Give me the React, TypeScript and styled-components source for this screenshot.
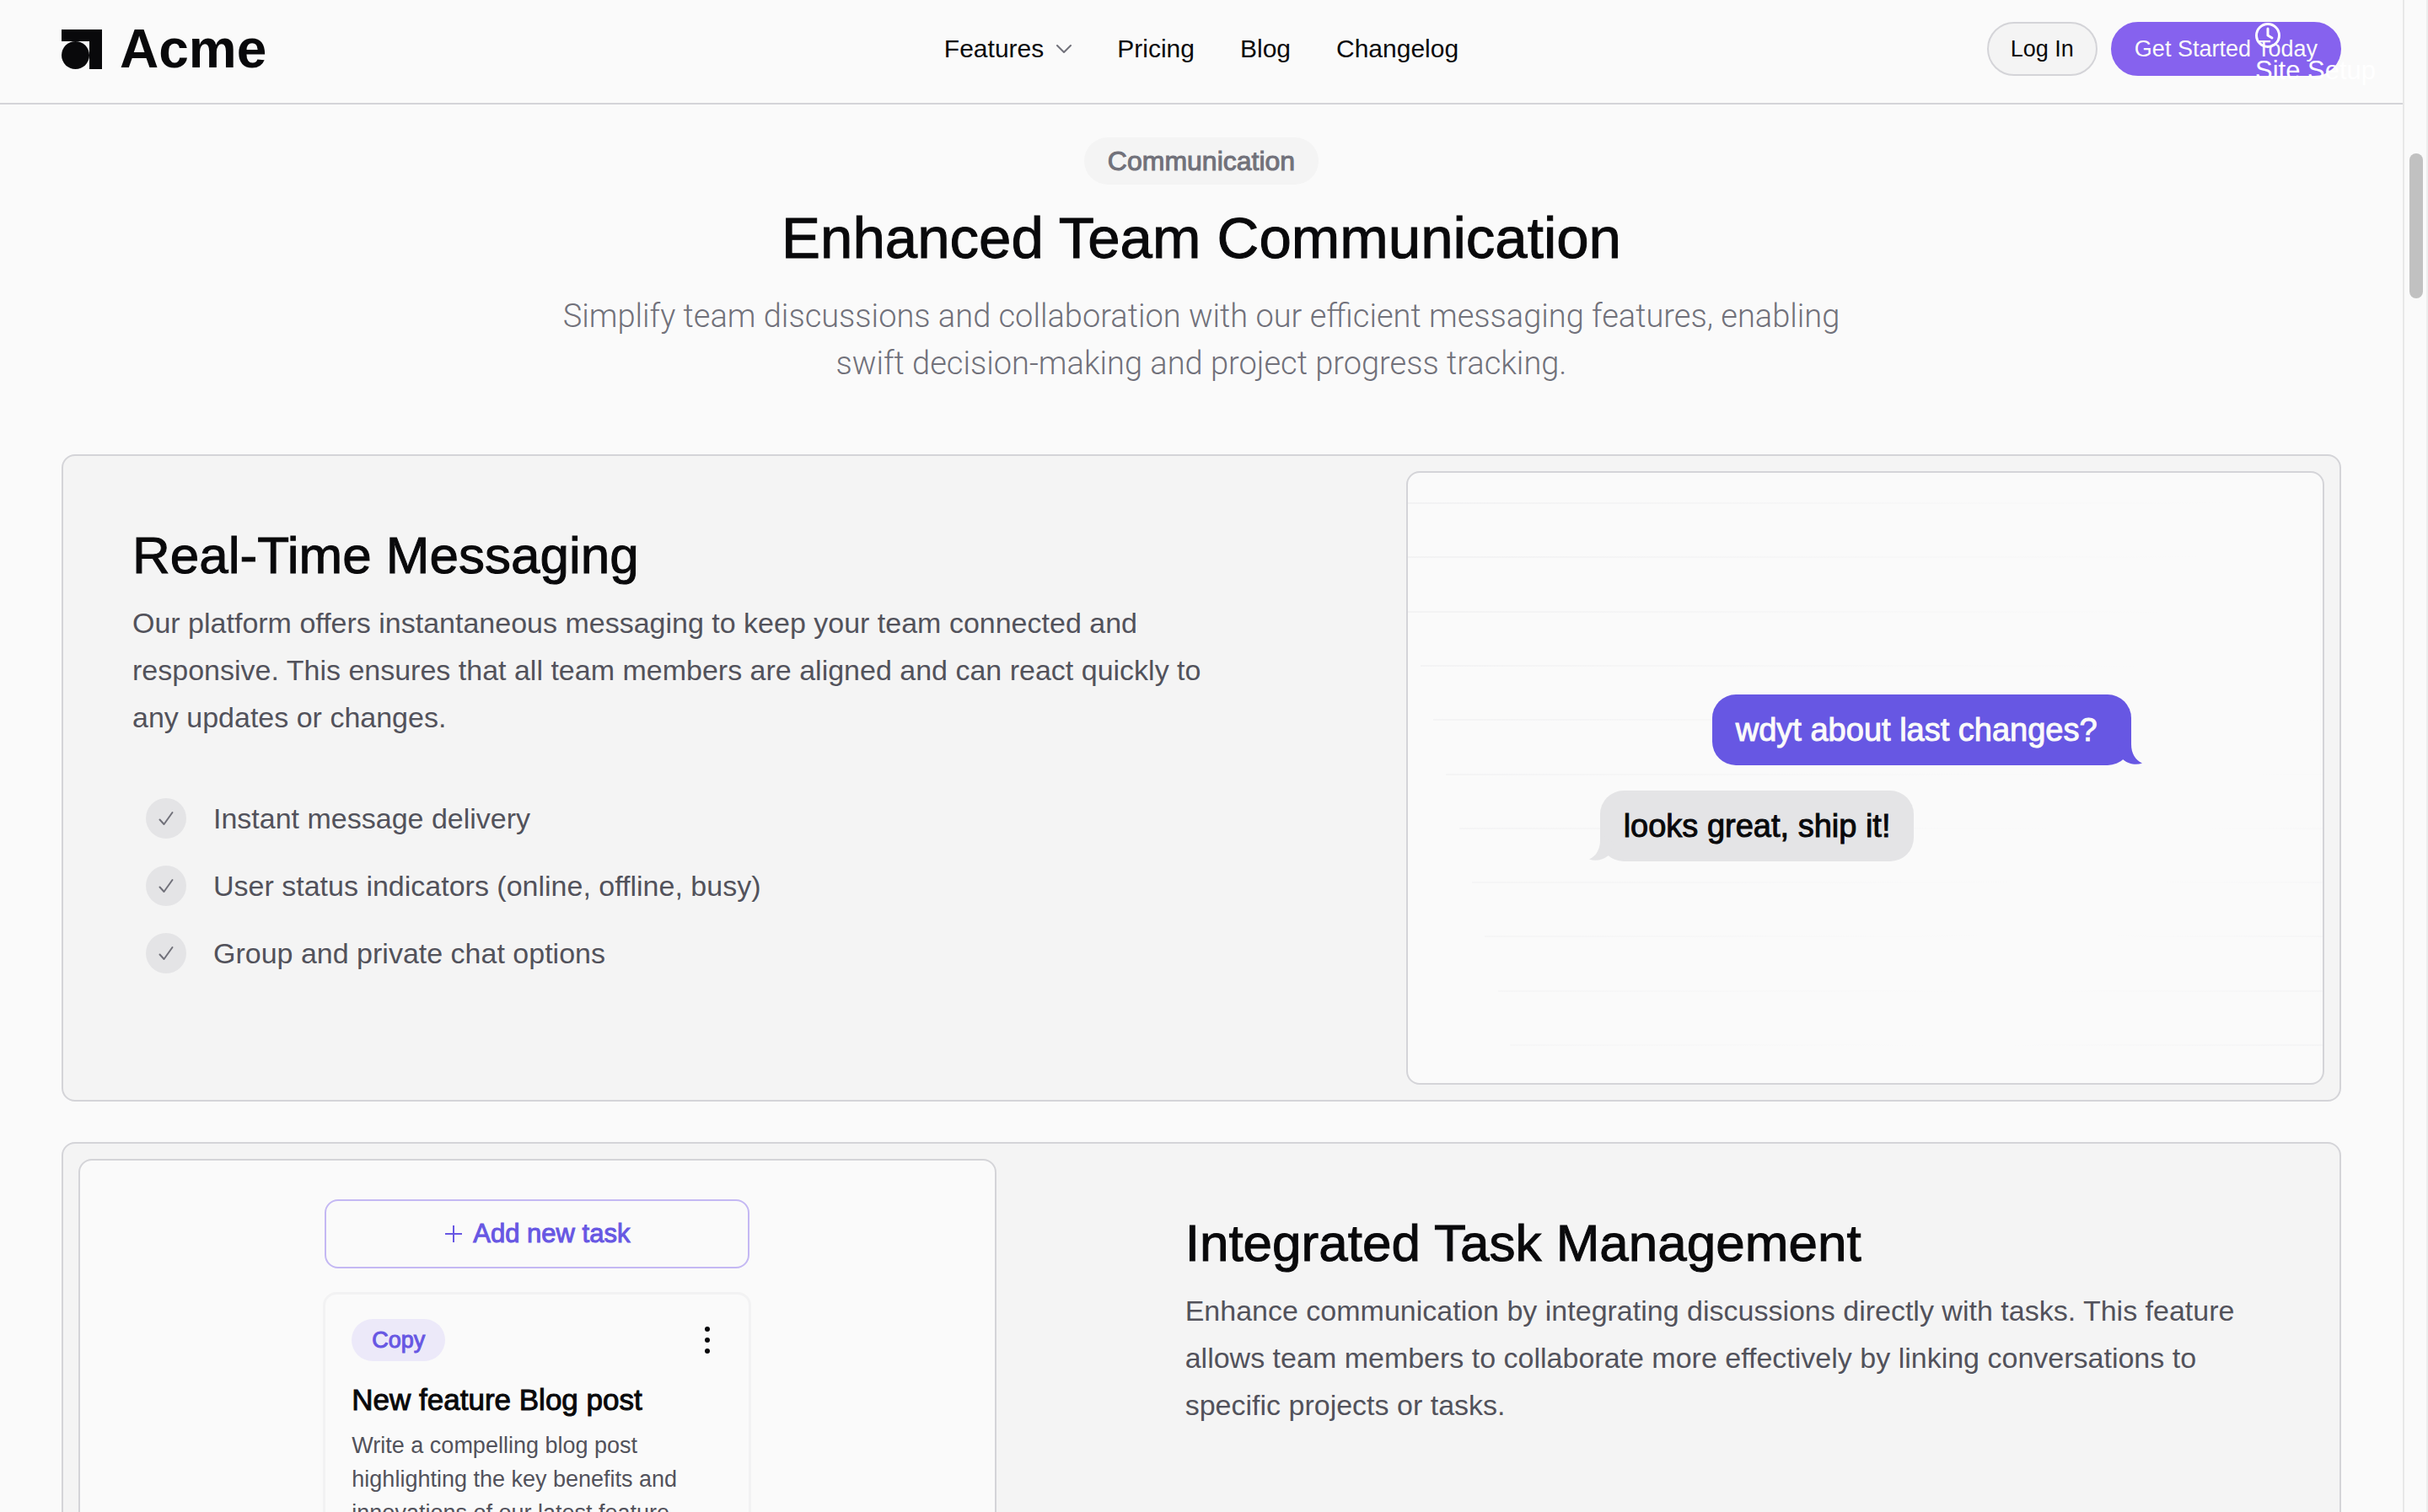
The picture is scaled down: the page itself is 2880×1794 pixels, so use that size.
import React from "react";
import styled, { createGlobalStyle, css } from "styled-components";

const color = {
  page: "#fafafa",
  surface: "#f4f4f4",
  line: "#d4d4d8",
  muted: "#e4e4e6",
  ink: "#09090b",
  body: "#52525b",
  soft: "#71717a",
  violet: "#8662ee",
  indigo: "#6757e3",
  indigoLine: "#c4b8f3",
  indigoTint: "#ece9f9",
};

const GlobalStyle = createGlobalStyle`
  *, *::before, *::after { box-sizing: border-box; }
  body {
    margin: 0;
    background: ${color.page};
    color: ${color.ink};
    font-family: "Liberation Sans", Arial, sans-serif;
  }
  h1, h2, h3, p, ul { margin: 0; padding: 0; }
  button { font: inherit; cursor: pointer; }
  a { color: inherit; text-decoration: none; }
`;

/* The family has no medium cut: a hairline stroke thickens the regular one. */
const medium = css`
  font-weight: 400;
  -webkit-text-stroke: 1px currentColor;
`;

const Shell = styled.div`
  display: flex;
  height: 100vh;
  overflow: hidden;
`;

const Page = styled.div`
  position: relative;
  flex: 1;
  min-width: 0;
`;

const ScrollTrack = styled.div`
  flex: none;
  width: 30px;
  padding: 182px 4px 0 6px;
  border-left: 2px solid #e8e8e8;
  border-right: 2px solid #ededed;
`;

const ScrollThumb = styled.div`
  height: 172px;
  border-radius: 8px;
  background: #c1c1c1;
`;

const Header = styled.header`
  display: grid;
  grid-template-columns: 1fr auto 1fr;
  align-items: start;
  height: 124px;
  padding: 26px 73px 0;
  border-bottom: 2px solid ${color.line};
`;

const Brand = styled.a`
  display: flex;
  align-items: center;
  gap: 21px;
  height: 64px;
  font-size: 64px;
  font-weight: bold;
  line-height: 64px;
`;

const Nav = styled.nav`
  display: flex;
  align-items: center;
  gap: 54px;
  height: 64px;
  font-size: 30px;
  line-height: 40px;
`;

const NavButton = styled.button`
  display: flex;
  align-items: center;
  gap: 15px;
  padding: 0;
  border: 0;
  background: none;
  color: inherit;
`;

const Actions = styled.div`
  display: flex;
  justify-content: flex-end;
  gap: 16px;
`;

const Action = styled.button<{ $primary?: boolean }>`
  height: 64px;
  padding: 0 26px;
  border: 2px solid ${(p) => (p.$primary ? color.violet : color.line)};
  border-radius: 32px;
  background: ${(p) => (p.$primary ? color.violet : color.surface)};
  color: ${(p) => (p.$primary ? "#fafafa" : color.ink)};
  font-size: 27px;
  line-height: 40px;
`;

const SiteSetup = styled.a`
  position: absolute;
  top: 26px;
  right: 32px;
  display: grid;
  color: #fff;
  font-size: 31px;
  line-height: 52px;
`;

const Main = styled.main`
  padding: 39px 73px 0;
`;

const Intro = styled.section`
  display: flex;
  flex-direction: column;
  align-items: center;
  gap: 24px;
  text-align: center;
`;

const Pill = styled.span`
  ${medium}
  padding: 8px 28px;
  border-radius: 28px;
  background: ${color.surface};
  color: ${color.soft};
  font-size: 32px;
  line-height: 40px;
`;

const Title = styled.h1`
  ${medium}
  font-size: 69px;
  line-height: 80px;
`;

const Lead = styled.p`
  max-width: 1536px;
  color: ${color.soft};
  font-family: Roboto, "Liberation Sans", sans-serif;
  font-size: 38px;
  font-weight: 300;
  line-height: 56px;
`;

const Features = styled.div`
  display: grid;
  gap: 48px;
  margin-top: 80px;
`;

const Feature = styled.article<{ $reverse?: boolean }>`
  display: grid;
  grid-template-columns: ${(p) => (p.$reverse ? "10fr 13fr" : "13fr 10fr")};
  column-gap: 160px;
  padding: 18px;
  border: 2px solid ${color.line};
  border-radius: 16px;
  background: ${color.surface};
`;

const Copy = styled.div`
  padding: 64px 64px 0;
`;

const FeatureTitle = styled.h2`
  ${medium}
  font-size: 62px;
  line-height: 72px;
`;

const bodyText = css`
  color: ${color.body};
  font-size: 34px;
`;

const FeatureText = styled.p`
  ${bodyText}
  margin-top: 16px;
  line-height: 56px;
`;

const Checks = styled.ul`
  display: grid;
  gap: 32px;
  margin-top: 68px;
  padding-left: 16px;
  list-style: none;
`;

const Check = styled.li`
  ${bodyText}
  display: flex;
  align-items: center;
  gap: 32px;
  line-height: 48px;
`;

const CheckDot = styled.span`
  display: grid;
  place-items: center;
  width: 48px;
  height: 48px;
  border-radius: 50%;
  background: ${color.muted};
`;

const Panel = styled.div`
  position: relative;
  display: flex;
  flex-direction: column;
  align-items: center;
  height: 728px;
  overflow: hidden;
  border: 2px solid ${color.line};
  border-radius: 16px;
  background: ${color.page};
`;

const PanelLines = styled.svg`
  position: absolute;
  inset: 0;
  width: 100%;
  height: 100%;
`;

const Chat = styled.div`
  position: relative;
  display: flex;
  flex-direction: column;
  gap: 30px;
  width: 630px;
  margin: auto;
`;

const Bubble = styled.div<{ $mine?: boolean }>`
  ${medium}
  position: relative;
  align-self: ${(p) => (p.$mine ? "flex-end" : "flex-start")};
  padding: ${(p) => (p.$mine ? "14px 40px 14px 28px" : "14px 28px")};
  border-radius: 28px;
  background: ${(p) => (p.$mine ? color.indigo : color.muted)};
  color: ${(p) => (p.$mine ? "#fafafa" : color.ink)};
  font-size: 38px;
  line-height: 56px;
  white-space: nowrap;
`;

const Tail = styled.svg<{ $mine?: boolean }>`
  position: absolute;
  bottom: 1px;
  ${(p) => (p.$mine ? "right: -13px;" : "left: -13px; transform: scaleX(-1);")}
`;

const Board = styled.div`
  display: grid;
  gap: 28px;
  width: 508px;
  margin-top: 46px;
`;

const AddTask = styled.button`
  ${medium}
  display: flex;
  align-items: center;
  justify-content: center;
  gap: 12px;
  height: 82px;
  margin: 0 2px;
  border: 2px solid ${color.indigoLine};
  border-radius: 16px;
  background: none;
  color: ${color.indigo};
  font-size: 31px;
`;

const Task = styled.section`
  padding: 29px 31px;
  border: 3px solid #f2f2f3;
  border-radius: 16px;
`;

const TaskTop = styled.div`
  display: flex;
  align-items: center;
  justify-content: space-between;
`;

const Tag = styled.span`
  ${medium}
  padding: 5px 24px;
  border-radius: 25px;
  background: ${color.indigoTint};
  color: ${color.indigo};
  font-size: 27px;
  line-height: 40px;
`;

const IconButton = styled.button`
  display: grid;
  place-items: center;
  width: 36px;
  height: 50px;
  padding: 0;
  border: 0;
  background: none;
`;

const TaskTitle = styled.h3`
  ${medium}
  margin-top: 22px;
  font-size: 35px;
  line-height: 48px;
`;

const TaskText = styled.p`
  margin-top: 10px;
  color: ${color.body};
  font-size: 27px;
  line-height: 40px;
`;

const Logo = () => (
  <svg width="48" height="47" viewBox="0 0 48 47" fill={color.ink} aria-hidden="true">
    <path d="M0 0h48v47H33V14H0z" />
    <ellipse cx="16.5" cy="30.5" rx="16.5" ry="16.5" />
  </svg>
);

const CheckIcon = () => (
  <svg width="18" height="18" viewBox="0 0 18 18" fill="none" stroke={color.soft} strokeWidth="2" strokeLinecap="round" strokeLinejoin="round" aria-hidden="true">
    <path d="M1.5 10.5 6.5 16 16.5 2" />
  </svg>
);

const BubbleTail = ({ mine }: { mine?: boolean }) => (
  <Tail $mine={mine} width="29" height="32" viewBox="0 0 29 32" fill={mine ? color.indigo : color.muted} aria-hidden="true">
    <path d="M16 0V8C16 19 21 27 29 30.500C21 33.500 12 31 6 26L0 12Z" />
  </Tail>
);

const lineStarts = [0, 0, 0, 15, 30, 45, 61, 76, 91, 107, 121];

const ChatBackdrop = () => (
  <PanelLines viewBox="0 0 1084 724" preserveAspectRatio="none" aria-hidden="true">
    <defs>
      <linearGradient id="fadeLeft" gradientUnits="userSpaceOnUse" x1="0" y1="0" x2="760" y2="420">
        <stop offset="0" stopColor="#f2f2f3" />
        <stop offset="1" stopColor="#f2f2f3" stopOpacity="0" />
      </linearGradient>
      <linearGradient id="fadeRight" gradientUnits="userSpaceOnUse" x1="1084" y1="724" x2="860" y2="520">
        <stop offset="0" stopColor="#f4f4f5" />
        <stop offset="1" stopColor="#f4f4f5" stopOpacity="0" />
      </linearGradient>
    </defs>
    {lineStarts.map((x, i) => (
      <g key={i}>
        <rect x={x} y={35 + Math.round(i * 64.3)} width={1084 - x} height="2" fill="url(#fadeLeft)" />
        <rect x={x} y={35 + Math.round(i * 64.3)} width={1084 - x} height="2" fill="url(#fadeRight)" />
      </g>
    ))}
  </PanelLines>
);

const checks = [
  "Instant message delivery",
  "User status indicators (online, offline, busy)",
  "Group and private chat options",
];

export default function App() {
  return (
    <>
      <GlobalStyle />
      <Shell>
        <Page>
          <Header>
            <Brand href="#">
              <Logo />
              Acme
            </Brand>
            <Nav>
              <NavButton type="button">
                Features
                <svg width="18" height="10" viewBox="0 0 18 10" fill="none" stroke={color.soft} strokeWidth="2" strokeLinecap="round" strokeLinejoin="round" aria-hidden="true">
                  <path d="M1 1l8 8 8-8" />
                </svg>
              </NavButton>
              <a href="#pricing">Pricing</a>
              <a href="#blog">Blog</a>
              <a href="#changelog">Changelog</a>
            </Nav>
            <Actions>
              <Action type="button">Log In</Action>
              <Action type="button" $primary>
                Get Started Today
              </Action>
            </Actions>
          </Header>

          <Main>
            <Intro>
              <Pill>Communication</Pill>
              <Title>Enhanced Team Communication</Title>
              <Lead>
                Simplify team discussions and collaboration with our efficient messaging features, enabling swift
                decision-making and project progress tracking.
              </Lead>
            </Intro>

            <Features>
              <Feature>
                <Copy>
                  <FeatureTitle>Real-Time Messaging</FeatureTitle>
                  <FeatureText>
                    Our platform offers instantaneous messaging to keep your team connected and responsive. This ensures
                    that all team members are aligned and can react quickly to any updates or changes.
                  </FeatureText>
                  <Checks>
                    {checks.map((text) => (
                      <Check key={text}>
                        <CheckDot>
                          <CheckIcon />
                        </CheckDot>
                        {text}
                      </Check>
                    ))}
                  </Checks>
                </Copy>
                <Panel>
                  <ChatBackdrop />
                  <Chat>
                    <Bubble $mine>
                      wdyt about last changes?
                      <BubbleTail mine />
                    </Bubble>
                    <Bubble>
                      looks great, ship it!
                      <BubbleTail />
                    </Bubble>
                  </Chat>
                </Panel>
              </Feature>

              <Feature $reverse>
                <Panel>
                  <Board>
                    <AddTask type="button">
                      <svg width="22" height="22" viewBox="0 0 22 22" stroke="currentColor" strokeWidth="2" aria-hidden="true">
                        <path d="M11 1v20M1 11h20" />
                      </svg>
                      Add new task
                    </AddTask>
                    <Task>
                      <TaskTop>
                        <Tag>Copy</Tag>
                        <IconButton type="button" aria-label="Task options">
                          <svg width="8" height="34" viewBox="0 0 8 34" fill={color.ink} aria-hidden="true">
                            <circle cx="4" cy="4" r="3" />
                            <circle cx="4" cy="17" r="3" />
                            <circle cx="4" cy="30" r="3" />
                          </svg>
                        </IconButton>
                      </TaskTop>
                      <TaskTitle>New feature Blog post</TaskTitle>
                      <TaskText>
                        Write a compelling blog post highlighting the key benefits and innovations of our latest feature
                        release.
                      </TaskText>
                    </Task>
                  </Board>
                </Panel>
                <Copy>
                  <FeatureTitle>Integrated Task Management</FeatureTitle>
                  <FeatureText>
                    Enhance communication by integrating discussions directly with tasks. This feature allows team
                    members to collaborate more effectively by linking conversations to specific projects or tasks.
                  </FeatureText>
                </Copy>
              </Feature>
            </Features>
          </Main>

          <SiteSetup href="#setup">
            <svg width="32" height="32" viewBox="0 0 32 32" fill="none" stroke="currentColor" strokeWidth="3" strokeLinecap="round" strokeLinejoin="round" aria-hidden="true">
              <circle cx="15" cy="16" r="13.500" />
              <path d="M15 8v8l5 3" />
            </svg>
            Site Setup
          </SiteSetup>
        </Page>
        <ScrollTrack>
          <ScrollThumb />
        </ScrollTrack>
      </Shell>
    </>
  );
}
